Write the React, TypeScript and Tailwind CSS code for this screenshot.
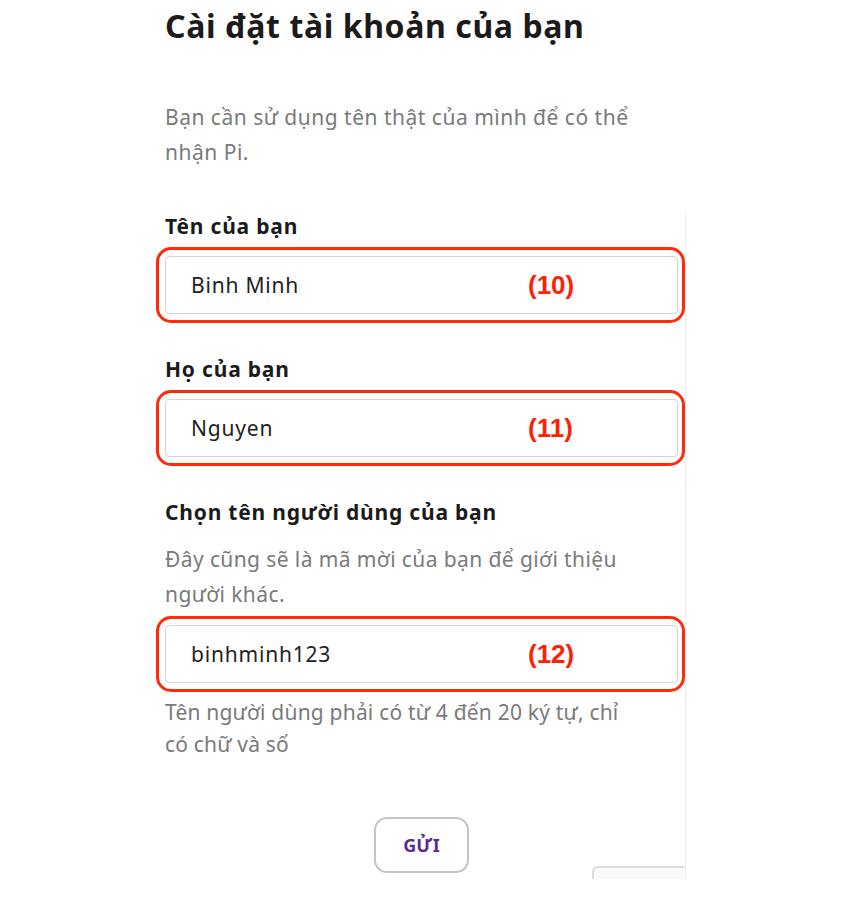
import React from 'react';

const fields = [
  { label: 'Tên của bạn', value: 'Binh Minh', tag: '(10)' },
  { label: 'Họ của bạn', value: 'Nguyen', tag: '(11)' },
];

function MarkedInput({ value, tag }: { value: string; tag: string }) {
  // red annotation ring drawn around the input
  return (
    <div className="ml-[-9px] w-[529px] rounded-[15px] border-[3px] border-[#ff2a0a] py-[6px] pl-[6px] pr-[4px]">
      <div className="flex h-[58px] w-[513px] items-center rounded-[4px] border border-[#d4d4d4] bg-white pl-[25px]">
        <span className="w-[337px] pt-[2px] text-[21px] tracking-[0.8px] text-[#222]">{value}</span>
        <span className="font-['Liberation_Sans',sans-serif] text-[26px] font-bold tracking-normal text-[#ff1f05]">{tag}</span>
      </div>
    </div>
  );
}

export default function App() {
  return (
    <div className="min-h-[902px] bg-white font-['Noto_Sans','Open_Sans',sans-serif]">
      <div className="w-[686px] pl-[165px]">
        <h1 className="pt-[6px] text-[32px] font-bold leading-[40px] tracking-[0.6px] text-[#1b1b1b]">
          Cài đặt tài khoản của bạn
        </h1>
        <p className="mt-[54px] text-[21px] leading-[35px] tracking-[0.5px] text-[#7a7a7a]">
          Bạn cần sử dụng tên thật của mình để có thể
          <br />
          nhận Pi.
        </p>
      </div>

      <div className="relative mt-[58px] w-[686px] border-r border-[#ececec] pb-[6px] pl-[165px]">
        {fields.map((f, i) => (
          <div key={f.tag} className={i === 0 ? 'mt-[-16px]' : 'mt-[32px]'}>
            <div className="mb-[7px] text-[21px] font-bold leading-[28px] tracking-[0.8px] text-[#1b1b1b]">{f.label}</div>
            <MarkedInput value={f.value} tag={f.tag} />
          </div>
        ))}

        <div className="mt-[32px]">
          <div className="text-[21px] font-bold leading-[28px] tracking-[0.8px] text-[#1b1b1b]">Chọn tên người dùng của bạn</div>
          <p className="mt-[16px] mb-[4px] text-[21px] leading-[35px] tracking-[0.4px] text-[#7a7a7a]">
            Đây cũng sẽ là mã mời của bạn để giới thiệu
            <br />
            người khác.
          </p>
          <MarkedInput value="binhminh123" tag="(12)" />
          <p className="mt-[4px] text-[21px] leading-[32px] tracking-[0.2px] text-[#7a7a7a]">
            Tên người dùng phải có từ 4 đến 20 ký tự, chỉ
            <br />
            có chữ và số
          </p>
        </div>

        <div className="mt-[57px] flex w-[513px] justify-center">
          <button className="h-[56px] w-[95px] rounded-[13px] border-2 border-[#c4c4c4] bg-white text-[18px] font-bold text-[#5b2b8f]">
            GỬI
          </button>
        </div>

        {/* badge peeking in at the bottom corner */}
        <div className="absolute bottom-0 right-0 h-[13px] w-[93px] rounded-tl-[6px] border-l-2 border-t-2 border-[#dcdcdc] bg-[#fafafa]" />
      </div>
    </div>
  );
}
